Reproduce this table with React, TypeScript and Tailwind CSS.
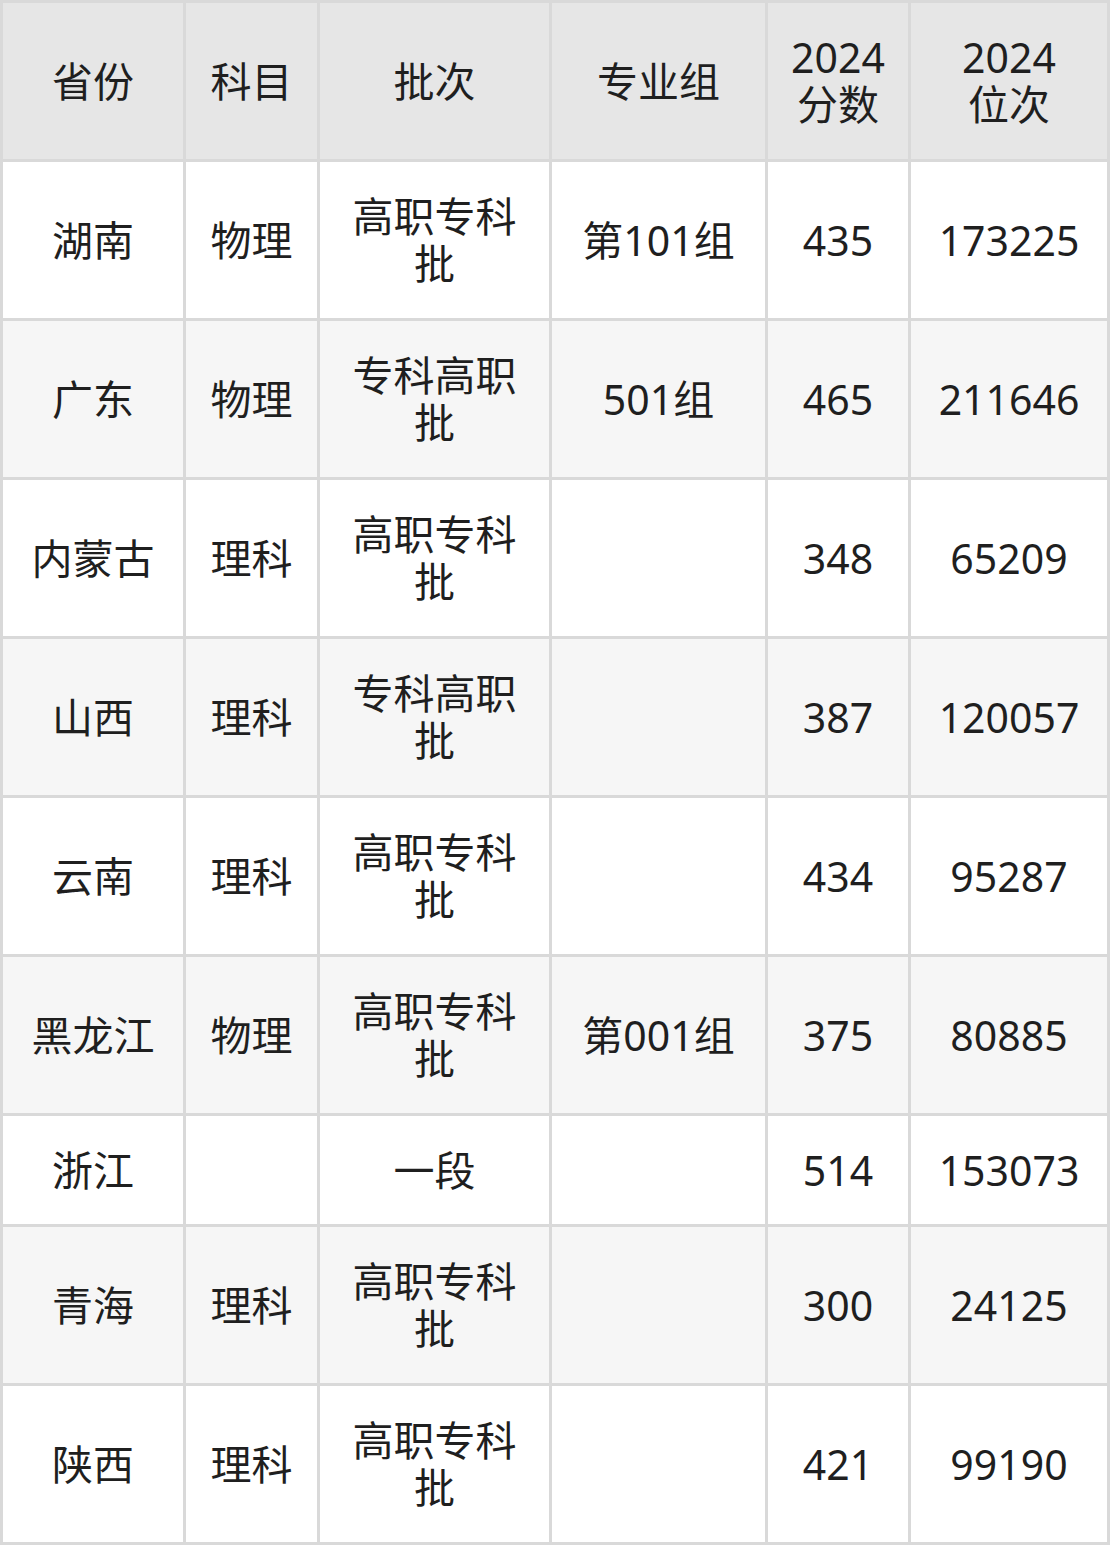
const header = ["省份", "科目", "批次", "专业组", "2024\n分数", "2024\n位次"];

type Row = { cells: string[]; short?: boolean };

const rows: Row[] = [
  { cells: ["湖南", "物理", "高职专科\n批", "第101组", "435", "173225"] },
  { cells: ["广东", "物理", "专科高职\n批", "501组", "465", "211646"] },
  { cells: ["内蒙古", "理科", "高职专科\n批", "", "348", "65209"] },
  { cells: ["山西", "理科", "专科高职\n批", "", "387", "120057"] },
  { cells: ["云南", "理科", "高职专科\n批", "", "434", "95287"] },
  { cells: ["黑龙江", "物理", "高职专科\n批", "第001组", "375", "80885"] },
  { cells: ["浙江", "", "一段", "", "514", "153073"], short: true },
  { cells: ["青海", "理科", "高职专科\n批", "", "300", "24125"] },
  { cells: ["陕西", "理科", "高职专科\n批", "", "421", "99190"] },
];

function Cell({ text, className }: { text: string; className: string }) {
  return (
    <div className={`flex items-center justify-center text-center whitespace-pre-line ${className}`}>
      {text}
    </div>
  );
}

export default function App() {
  return (
    <div
      className="w-[1110px] bg-[#d9d9d9] p-[3px] text-[41px] leading-[47px] text-[#1f1f1f]"
      style={{ fontFamily: '"Noto Sans", "Noto Sans CJK SC", sans-serif' }}
    >
      <div className="grid grid-cols-[180px_131px_229px_213px_140px_196px] gap-[3px]">
        {header.map((h, i) => (
          <Cell key={`h${i}`} text={h} className="h-[156px] bg-[#e6e6e6]" />
        ))}
        {rows.map((row, r) =>
          row.cells.map((c, i) => (
            <Cell
              key={`${r}-${i}`}
              text={c}
              className={`${row.short ? "h-[108px]" : "h-[156px]"} ${
                r % 2 === 1 ? "bg-[#f6f6f6]" : "bg-white"
              }`}
            />
          ))
        )}
      </div>
    </div>
  );
}
